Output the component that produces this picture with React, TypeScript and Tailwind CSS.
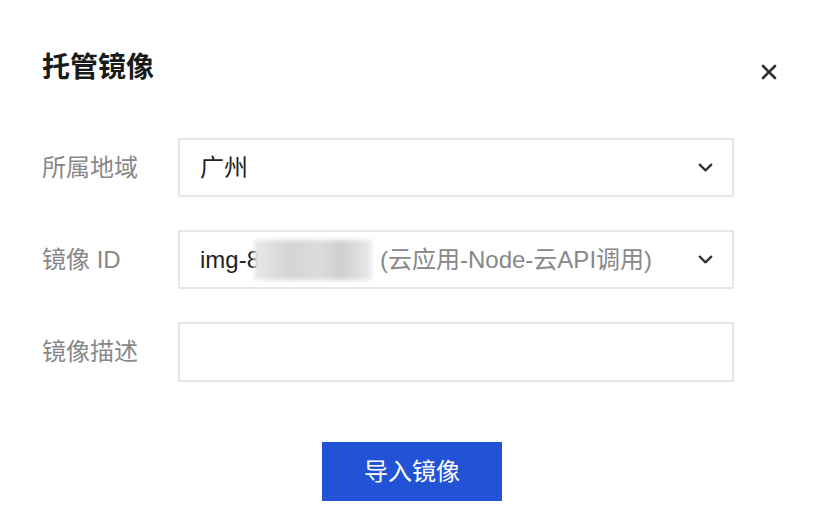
import { X, ChevronDown } from "lucide-react";

const font = { fontFamily: '"Liberation Sans", "Noto Sans CJK SC", sans-serif' };

function Label({ children }: { children: React.ReactNode }) {
  return <div className="w-[136px] shrink-0 text-[24px] text-[#888]">{children}</div>;
}

export default function App() {
  return (
    <div className="h-[529px] w-[815px] bg-white" style={font}>
      <div className="flex items-center justify-between pl-[42px] pr-[34px] pt-[50px]">
        <h1 className="text-[28px] font-bold leading-[36px] text-[#1a1a1a]">托管镜像</h1>
        <button className="mt-[8px] text-[#333]">
          <X size={24} strokeWidth={2.6} />
        </button>
      </div>

      <div className="mt-[52px] flex flex-col gap-[33px] pl-[42px]">
        <div className="flex items-center">
          <Label>所属地域</Label>
          <div className="flex h-[59px] w-[556px] items-center justify-between border-2 border-[#e6e7ec] pl-[20px] pr-[15px] text-[24px] text-[#222]">
            <span>广州</span>
            <ChevronDown size={23} strokeWidth={2.4} className="text-[#333]" />
          </div>
        </div>

        <div className="flex items-center">
          <Label>镜像 ID</Label>
          <div className="flex h-[59px] w-[556px] items-center justify-between border-2 border-[#e6e7ec] pl-[20px] pr-[15px] text-[24px] text-[#222]">
            <div className="flex items-center">
              <span>img-8</span>
              <span className="ml-[-6px] h-[40px] w-[118px] bg-[linear-gradient(90deg,#e9e9e9,#d4d4d4_30%,#dcdcdc_55%,#cfcfcf_75%,#ececec)] blur-[2px]" />
              <span className="ml-[8px] text-[#888]">(云应用-Node-云API调用)</span>
            </div>
            <ChevronDown size={23} strokeWidth={2.4} className="text-[#333]" />
          </div>
        </div>

        <div className="flex items-center">
          <Label>镜像描述</Label>
          <div className="h-[60px] w-[556px] border-2 border-[#e6e7ec]" />
        </div>
      </div>

      <div className="mt-[60px] flex justify-center pl-[9px]">
        <button className="h-[59px] w-[180px] bg-[#2253d6] text-[24px] text-white">导入镜像</button>
      </div>
    </div>
  );
}
